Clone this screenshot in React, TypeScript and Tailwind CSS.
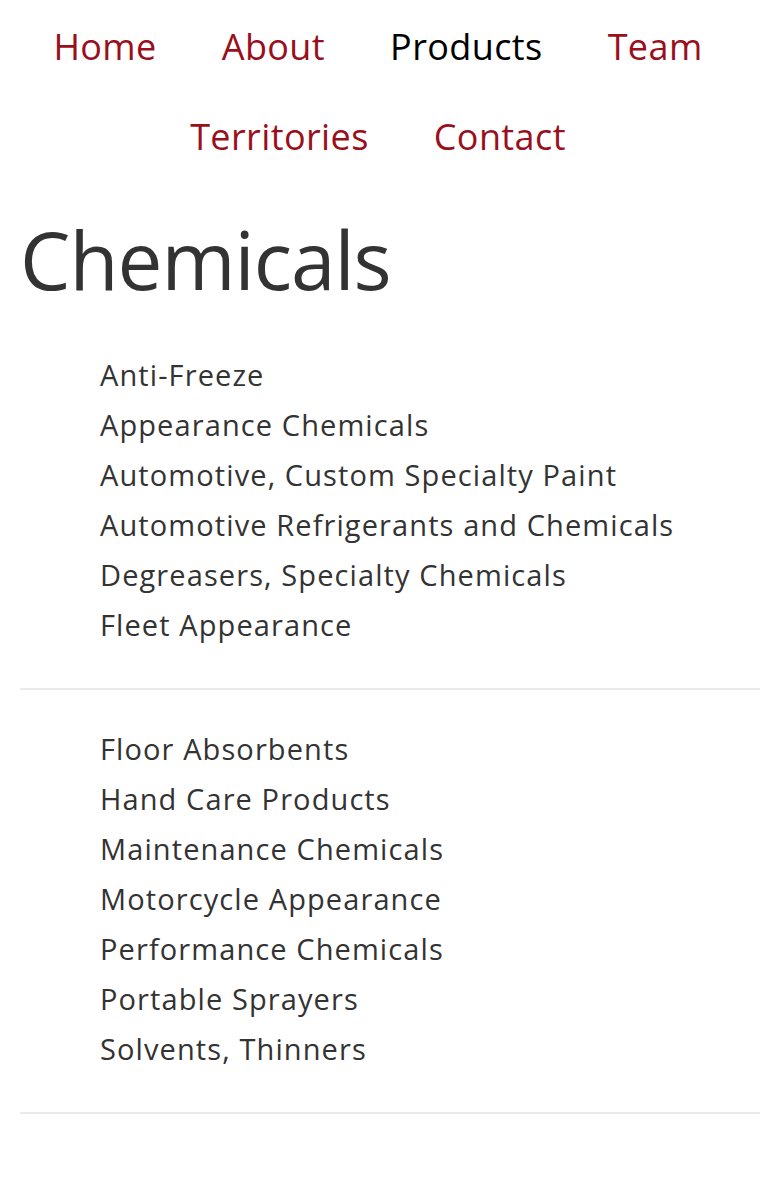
import React from "react";

const nav = [
  { label: "Home", active: false },
  { label: "About", active: false },
  { label: "Products", active: true },
  { label: "Team", active: false },
  { label: "Territories", active: false },
  { label: "Contact", active: false },
];

const group1 = [
  "Anti-Freeze",
  "Appearance Chemicals",
  "Automotive, Custom Specialty Paint",
  "Automotive Refrigerants and Chemicals",
  "Degreasers, Specialty Chemicals",
  "Fleet Appearance",
];

const group2 = [
  "Floor Absorbents",
  "Hand Care Products",
  "Maintenance Chemicals",
  "Motorcycle Appearance",
  "Performance Chemicals",
  "Portable Sprayers",
  "Solvents, Thinners",
];

function List({ items }: { items: string[] }) {
  return (
    <ul className="pl-[80px]">
      {items.map((t) => (
        <li
          key={t}
          className="text-[29px] leading-[50px] tracking-[1.1px] text-[#333333] whitespace-nowrap"
        >
          {t}
        </li>
      ))}
    </ul>
  );
}

export default function App() {
  return (
    <div
      className="bg-white min-h-[1190px] w-[778px]"
      style={{ fontFamily: '"Open Sans", sans-serif' }}
    >
      <nav className="flex flex-wrap justify-center pt-[2px] pr-[22px]">
        {nav.map((n) => (
          <a
            key={n.label}
            className={`px-[32.5px] text-[36px] leading-[90px] tracking-[0.4px] ${
              n.active ? "text-black" : "text-[#9a0f1c]"
            }`}
          >
            {n.label}
          </a>
        ))}
      </nav>
      <div className="px-[20px] pr-[18px]">
        <h1 className="text-[80px] leading-[100px] tracking-[-1px] text-[#333333] mt-[27px]">
          Chemicals
        </h1>
        <div className="mt-[41px]">
          <List items={group1} />
        </div>
        <hr className="border-0 h-[2px] bg-[#eaeaea] mt-[38px] mb-[34px]" />
        <List items={group2} />
        <hr className="border-0 h-[2px] bg-[#eaeaea] mt-[38px]" />
      </div>
    </div>
  );
}
